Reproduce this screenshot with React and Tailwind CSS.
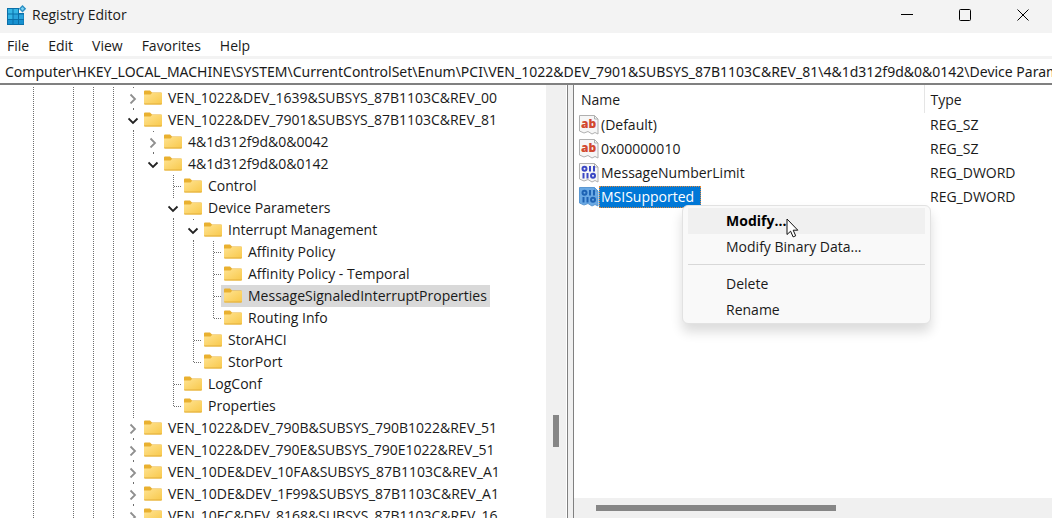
import React from "react";

const DOTS_V =
  "bg-[repeating-linear-gradient(180deg,#6e6e6e_0_1px,transparent_1px_2px)]";
const DOTS_H =
  "bg-[repeating-linear-gradient(90deg,#6e6e6e_0_1px,transparent_1px_2px)]";

const menus = ["File", "Edit", "View", "Favorites", "Help"];

// lines: which ancestor columns still have a sibling further down
const treeRows = [
  { name: "VEN_1022&DEV_1639&SUBSYS_87B1103C&REV_00", lines: [], toggle: "closed" },
  { name: "VEN_1022&DEV_7901&SUBSYS_87B1103C&REV_81", lines: [], toggle: "open" },
  { name: "4&1d312f9d&0&0042", lines: [true], toggle: "closed" },
  { name: "4&1d312f9d&0&0142", lines: [true], toggle: "open", last: true },
  { name: "Control", lines: [true, false] },
  { name: "Device Parameters", lines: [true, false], toggle: "open" },
  { name: "Interrupt Management", lines: [true, false, true], toggle: "open" },
  { name: "Affinity Policy", lines: [true, false, true, true] },
  { name: "Affinity Policy - Temporal", lines: [true, false, true, true] },
  {
    name: "MessageSignaledInterruptProperties",
    lines: [true, false, true, true],
    selected: true,
  },
  { name: "Routing Info", lines: [true, false, true, true], last: true },
  { name: "StorAHCI", lines: [true, false, true] },
  { name: "StorPort", lines: [true, false, true], last: true },
  { name: "LogConf", lines: [true, false] },
  { name: "Properties", lines: [true, false], last: true },
  { name: "VEN_1022&DEV_790B&SUBSYS_790B1022&REV_51", lines: [], toggle: "closed" },
  { name: "VEN_1022&DEV_790E&SUBSYS_790E1022&REV_51", lines: [], toggle: "closed" },
  { name: "VEN_10DE&DEV_10FA&SUBSYS_87B1103C&REV_A1", lines: [], toggle: "closed" },
  { name: "VEN_10DE&DEV_1F99&SUBSYS_87B1103C&REV_A1", lines: [], toggle: "closed" },
  { name: "VEN_10EC&DEV_8168&SUBSYS_87B1103C&REV_16", lines: [], toggle: "closed" },
];

const rootLines = [true, false, true, true, true];

const values = [
  { name: "(Default)", type: "REG_SZ", kind: "string" },
  { name: "0x00000010", type: "REG_SZ", kind: "string" },
  { name: "MessageNumberLimit", type: "REG_DWORD", kind: "binary" },
  { name: "MSISupported", type: "REG_DWORD", kind: "binary", selected: true },
];

const RegistryIcon = () => (
  <svg width="20" height="20" viewBox="0 0 20 20" aria-hidden="true">
    <path d="M0 3h12v5h5v12H0z" fill="#0b6fa8" />
    <path d="M1 4h4.500v4.500H1zM6.500 4H11v4.500H6.500zM1 9.500h4.500V14H1z" fill="#35b5e5" />
    <path d="M6.500 9.500H11V14H6.500zM12 9.500h4.500V14H12z" fill="#2aa3dc" />
    <path d="M1 15h4.500v4H1zM6.500 15H11v4H6.500zM12 15h4.500v4H12z" fill="#1791d0" />
    <path d="M15.500 0l3.700 3.700-3.700 3.700-3.700-3.700z" fill="#2a8fc4" />
    <path d="M15.500 2l1.700 1.700-1.700 1.700-1.700-1.700z" fill="#7fd3f3" />
  </svg>
);

const FolderIcon = () => (
  <svg width="18" height="16" viewBox="0 0 18 16" className="shrink-0" aria-hidden="true">
    <defs>
      <linearGradient id="folder" x1="0" y1="0" x2="1" y2="1">
        <stop offset="0" stopColor="#ffe391" />
        <stop offset="1" stopColor="#f8c84a" />
      </linearGradient>
    </defs>
    <path d="M0 1.500q0-1 1-1h5L8 2.500h9q1 0 1 1v4H0z" fill="#e9b02f" />
    <path d="M0 4.500h6.500L8 3h10v10.500q0 1-1 1H1q-1 0-1-1z" fill="url(#folder)" />
    <path d="M0 13.500h18q0 1-1 1H1q-1 0-1-1z" fill="#e2ad3a" />
  </svg>
);

const ValueIcon = ({ kind, selected }) => (
  <svg width="20" height="20" viewBox="0 0 20 20" className="shrink-0" aria-hidden="true">
    <path
      d="M.5.5h15l3.500 3.500v15l-3-1.500-3 1.500-4-2.500-4 1.500-4.500-2z"
      fill={selected ? "#6aa9e4" : "#f6f6f6"}
      stroke={selected ? "#5b98d2" : "#b0b0b0"}
    />
    <path d="M15.500.5V4H19" fill="none" stroke={selected ? "#5b98d2" : "#b0b0b0"} />
    {kind === "string" ? (
      <text x="2" y="13" fontSize="12" fontWeight="800" fill="#d2492f">
        ab
      </text>
    ) : (
      <g fill="none" stroke={selected ? "#1e63b4" : "#3a47c4"} strokeWidth="2">
        <circle cx="5.500" cy="5.800" r="2" />
        <path d="M11 3v5.500M15 3v5.500M4.500 10v5.500M8.500 10v5.500" />
        <circle cx="14" cy="12.700" r="2" />
      </g>
    )}
  </svg>
);

const Cursor = () => (
  <svg
    width="14"
    height="21"
    viewBox="0 0 14 21"
    className="absolute left-[103px] top-3"
    aria-hidden="true"
  >
    <path
      d="M1 1v15.500l3.600-3.300 2.500 5.700 2.600-1.100-2.500-5.600h4.600z"
      fill="#fff"
      stroke="#111"
    />
  </svg>
);

const Guide = ({ on }) => (
  <span className="flex w-5 shrink-0 pl-[9px]">
    {on && <span className={`w-px ${DOTS_V}`} />}
  </span>
);

const Toggle = ({ state, last }) => (
  <button
    aria-label={state === "open" ? "Collapse" : "Expand"}
    className="flex w-[17px] shrink-0 flex-col items-center justify-between pl-[2px]"
  >
    <span className="h-px w-px bg-[#6e6e6e]" />
    <svg width="11" height="11" viewBox="0 0 11 11" fill="none" strokeWidth="1.800">
      {state === "open" ? (
        <path d="M.5 3.500l4.500 4.500L9.500 3.500" stroke="#222" />
      ) : (
        <path d="M2.500 1.500l4.500 4.500-4.500 4.500" stroke="#8f8f8f" />
      )}
    </svg>
    <span className={`h-px w-px ${last ? "" : "bg-[#6e6e6e]"}`} />
  </button>
);

const Branch = ({ last }) => (
  <span className="flex w-[17px] shrink-0 pl-[9px]">
    <span className={`w-px ${DOTS_V} ${last ? "h-3" : ""}`} />
    <span className={`mt-[11px] h-px flex-1 ${DOTS_H}`} />
  </span>
);

const TreeRow = ({ row }) => (
  <li className="flex h-[22px] pl-6">
    {[...rootLines, ...row.lines].map((on, i) => (
      <Guide key={i} on={on} />
    ))}
    {row.toggle ? (
      <Toggle state={row.toggle} last={row.last} />
    ) : (
      <Branch last={row.last} />
    )}
    <span
      className={`flex items-center gap-1.5 whitespace-nowrap px-[3px] ${
        row.selected ? "bg-[#d9d9d9]" : ""
      }`}
    >
      <FolderIcon />
      {row.name}
    </span>
  </li>
);

const ContextMenu = () => (
  <div
    role="menu"
    className="absolute left-[108px] top-[120px] flex w-[249px] flex-col rounded-md border border-[#e2e2e2] bg-[#f9f9f9] px-[5px] pt-0.5 shadow-[0_8px_12px_rgba(0,0,0,0.14)]"
  >
    <button role="menuitem" className="h-[26px] bg-[#f0f0f0] pl-[38px] text-left font-bold text-black">
      Modify...
    </button>
    <button role="menuitem" className="h-[26px] pl-[38px] text-left">
      Modify Binary Data...
    </button>
    <hr className="mb-1.5 mt-1 border-[#d8d8d8]" />
    <button role="menuitem" className="h-[26px] pl-[38px] text-left">
      Delete
    </button>
    <button role="menuitem" className="h-[26px] pl-[38px] text-left">
      Rename
    </button>
    <Cursor />
  </div>
);

const TitleBar = () => (
  <header className="flex h-[33px] shrink-0 items-center bg-[#f3f3f3] pb-1 pl-[7px]">
    <RegistryIcon />
    <h1 className="ml-[5px] flex-1">Registry Editor</h1>
    <div className="flex h-7 text-black">
      <button aria-label="Minimize" className="flex w-[58px] items-center justify-center">
        <svg width="12" height="12" viewBox="0 0 12 12" stroke="currentColor">
          <path d="M0 5.500h12" />
        </svg>
      </button>
      <button aria-label="Maximize" className="flex w-[58px] items-center justify-center">
        <svg width="12" height="12" viewBox="0 0 12 12" stroke="currentColor" fill="none">
          <rect x=".5" y=".5" width="11" height="11" rx="1" />
        </svg>
      </button>
      <button aria-label="Close" className="flex w-[58px] items-center justify-center">
        <svg width="12" height="12" viewBox="0 0 12 12" stroke="currentColor">
          <path d="M.5.5l11 11M11.500.5l-11 11" />
        </svg>
      </button>
    </div>
  </header>
);

const App = () => {
  return (
    <div className="flex h-screen flex-col overflow-hidden bg-white font-['Open_Sans',sans-serif] text-[14px] leading-5 text-[#1a1a1a]">
      <TitleBar />
      <nav className="flex h-[23px] shrink-0 items-end gap-[19px] pl-[7px]">
        {menus.map((menu) => (
          <button key={menu}>{menu}</button>
        ))}
      </nav>
      <div className="shrink-0 border-b-2 border-t-[3px] border-b-[#808080] border-t-[#f3f3f3]">
        <input
          aria-label="Address"
          className="block h-6 w-full pl-[5px] font-['Noto_Sans',sans-serif] outline-none"
          defaultValue="Computer\HKEY_LOCAL_MACHINE\SYSTEM\CurrentControlSet\Enum\PCI\VEN_1022&DEV_7901&SUBSYS_87B1103C&REV_81\4&1d312f9d&0&0142\Device Parameters"
        />
      </div>
      <main className="flex min-h-0 flex-1">
        <section className="flex w-[53.9%] shrink-0 pr-px">
          <ul className="min-w-0 flex-1 overflow-hidden pt-0.5">
            {treeRows.map((row) => (
              <TreeRow key={row.name} row={row} />
            ))}
          </ul>
          <div className="flex w-5 flex-col items-center bg-[#f0f0f0]">
            <div className="flex-[330]" />
            <div className="h-8 w-1.5 bg-[#868686]" />
            <div className="flex-[71]" />
          </div>
        </section>
        <div className="w-[7px] shrink-0 border-x border-[#808080] bg-[#f0f0f0]" />
        <section className="relative flex min-w-0 flex-1 flex-col">
          <table className="w-full table-fixed border-collapse text-left">
            <thead>
              <tr className="h-7">
                <th className="w-[350px] border-r border-[#e5e5e5] p-0 pl-[7px] pt-0.5 font-normal">
                  Name
                </th>
                <th className="p-0 pl-1.5 pt-0.5 font-normal">Type</th>
              </tr>
            </thead>
            <tbody>
              {values.map((value) => (
                <tr key={value.name} className="h-6">
                  <td className="p-0 pl-[5px]">
                    <div className="flex items-center">
                      <ValueIcon kind={value.kind} selected={value.selected} />
                      <span
                        className={`border border-dotted pl-px pr-1.5 ${
                          value.selected
                            ? "border-[#e08a3c] bg-[#0078d7] text-white"
                            : "border-transparent"
                        }`}
                      >
                        {value.name}
                      </span>
                    </div>
                  </td>
                  <td className="p-0 pl-1.5">{value.type}</td>
                </tr>
              ))}
            </tbody>
          </table>
          <ContextMenu />
          <div className="mt-auto flex h-5 items-center bg-[#f0f0f0]">
            <div className="flex-[22]" />
            <div className="h-1.5 flex-[240] bg-[#868686]" />
            <div className="flex-[216]" />
          </div>
        </section>
      </main>
    </div>
  );
};

export default App;
